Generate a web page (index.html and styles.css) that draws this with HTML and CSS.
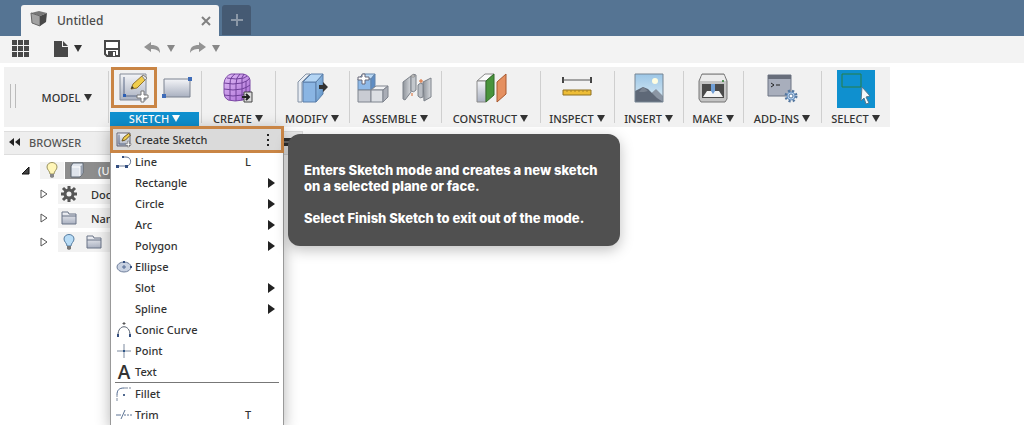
FILE: index.html
```html
<!DOCTYPE html>
<html lang="en">
<head>
  <meta charset="UTF-8">
  <meta name="viewport" content="width=device-width, initial-scale=1.0">
  <title>Untitled</title>
  <link rel="stylesheet" href="styles.css">
</head>
<body>
  <!-- shared gradients -->
  <svg class="defs" aria-hidden="true">
    <defs>
      <linearGradient id="steel" x1="0" y1="0" x2="0" y2="1"><stop offset="0" stop-color="#f4f5f8"/><stop offset="1" stop-color="#a9b0c0"/></linearGradient>
      <linearGradient id="blue" x1="0" y1="0" x2="1" y2="1"><stop offset="0" stop-color="#9cc4ea"/><stop offset="1" stop-color="#5c8fc4"/></linearGradient>
      <linearGradient id="purple" x1="0" y1="0" x2="1" y2="1"><stop offset="0" stop-color="#e0bcf6"/><stop offset="1" stop-color="#a868d4"/></linearGradient>
      <linearGradient id="sky" x1="0" y1="0" x2="0" y2="1"><stop offset="0" stop-color="#9cc6e6"/><stop offset="1" stop-color="#dcecf4"/></linearGradient>
      <linearGradient id="plate" x1="0" y1="0" x2="1" y2="0"><stop offset="0" stop-color="#8f949b"/><stop offset="1" stop-color="#d6d9dd"/></linearGradient>
    </defs>
  </svg>

  <div class="app">
    <header class="titlebar">
      <div class="tab">
        <svg class="tab-icon" viewBox="0 0 18 18"><path d="M1 3 9 1l8 2-7 3z" fill="#777"/><path d="M1 3l9 3v10l-8-3z" fill="#a2a2a2" stroke="#666"/><path d="M10 6l7-3-1 9-6 4z" fill="#484848"/></svg>
        <span class="tab-title">Untitled</span>
        <button class="tab-close" aria-label="Close tab"><svg width="10" height="10" viewBox="0 0 10 10"><path d="M1 1l8 8M9 1 1 9" stroke="#808080" stroke-width="2"/></svg></button>
      </div>
      <button class="tab-add" aria-label="New tab"><svg width="12" height="12" viewBox="0 0 12 12"><path d="M6 0v12M0 6h12" stroke="#8b98a7" stroke-width="2"/></svg></button>
    </header>

    <nav class="quickbar">
      <button aria-label="Data panel"><svg width="18" height="17" viewBox="0 0 18 17"><path d="M0 0h5v5H0zM6 0h5v5H6zM12 0h5v5h-5zM0 6h5v5H0zM6 6h5v5H6zM12 6h5v5h-5zM0 12h5v5H0zM6 12h5v5H6zM12 12h5v5h-5z" fill="#484848"/></svg></button>
      <button class="file" aria-label="File"><svg width="14" height="17" viewBox="0 0 14 17"><path d="M0 1h8v6h6v10H0zM9 1l5 5H9z" fill="#484848"/></svg><i class="caret"></i></button>
      <button class="save" aria-label="Save"><svg width="16" height="17" viewBox="0 0 16 17"><path d="M1 1h14v15H3l-2-2z" fill="#fff" stroke="#484848" stroke-width="2"/><path d="M1 8h14v2H1zM4 11h8v6H4z" fill="#484848"/><path d="M9 12h2v4H9z" fill="#fff"/></svg></button>
      <button class="undo" aria-label="Undo"><svg width="17" height="14" viewBox="0 0 17 14"><path d="M0 6l7-5v3c6 0 9 2 9 8-2-3-4-4-9-4v3z" fill="#939393"/></svg><i class="caret grey"></i></button>
      <button aria-label="Redo"><svg width="17" height="14" viewBox="0 0 17 14"><path d="M17 6l-7-5v3C4 4 1 6 1 12c2-3 4-4 9-4v3z" fill="#939393"/></svg><i class="caret grey"></i></button>
    </nav>

    <div class="ribbon">
      <div class="grip"></div>
      <button class="workspace">MODEL<i class="caret"></i></button>

      <section class="group sketch open">
        <div class="icons">
          <button class="tool marked" aria-label="Create Sketch">
            <svg width="32" height="32" viewBox="0 0 32 32"><path d="M2 2h26v26H2z" fill="url(#steel)" stroke="#848b98"/><path d="M6 5v19h17" fill="none" stroke="#5c6b88"/><path d="M5 22h3v3H5z" fill="#2d5fb4"/><path d="M13 17l2-5L25 3l4 3-10 10z" fill="#f0cd4c" stroke="#94742c"/><path d="M24 4l1-1 4 3-2 2z" fill="#eee" stroke="#888"/><path d="M13 17l1-3 2 2z" fill="#333"/><path d="M23 19h3v4h4v3h-4v4h-3v-4h-4v-3h4z" fill="#fff" stroke="#777"/></svg>
          </button>
          <button class="tool" aria-label="Rectangle">
            <svg width="32" height="32" viewBox="0 0 32 32"><path d="M3 7h26v18H3z" fill="url(#steel)" stroke="#7b8290"/><path d="M27 5h4v4h-4zM1 22h4v4H1z" fill="#3f6cb8"/></svg>
          </button>
        </div>
        <button class="label">SKETCH<i class="caret"></i></button>

        <div class="menu">
          <ul>
            <li class="item current">
              <svg width="16" height="16" viewBox="0 0 32 32"><path d="M2 2h26v26H2z" fill="url(#steel)" stroke="#667" stroke-width="2"/><path d="M6 5v19h17" fill="none" stroke="#5c6b88" stroke-width="2"/><path d="M12 18l3-7L25 3l4 3-10 10z" fill="#f0cd4c" stroke="#6b5520" stroke-width="2"/><path d="M23 18h3v5h4v3h-4v4h-3v-4h-4v-3h4z" fill="#fff" stroke="#666"/></svg>
              <button>Create Sketch</button>
              <svg class="more" width="4" height="14" viewBox="0 0 4 14"><path d="M1 1h2v2H1zM1 6h2v2H1zM1 11h2v2H1z" fill="#222"/></svg>
            </li>
            <li class="item">
              <svg width="16" height="16" viewBox="0 0 16 16"><path d="M2 12h9M7 3h3c6 0 6 8 1 9" fill="none" stroke="#667693"/><path d="M0 11h3v3H0zM9 11h3v3H9zM6 2h2v2H6z" fill="#344f80"/></svg>
              <button>Line</button><kbd>L</kbd>
            </li>
            <li class="item"><span class="blank"></span><button>Rectangle</button><i class="sub"></i></li>
            <li class="item"><span class="blank"></span><button>Circle</button><i class="sub"></i></li>
            <li class="item"><span class="blank"></span><button>Arc</button><i class="sub"></i></li>
            <li class="item"><span class="blank"></span><button>Polygon</button><i class="sub"></i></li>
            <li class="item">
              <svg width="16" height="16" viewBox="0 0 16 16"><ellipse cx="8" cy="8" rx="7" ry="5" fill="#c9d2e2" stroke="#6f7f9c"/><path d="M8 6v4M6 8h4" stroke="#536a94"/><path d="M7 2h2v2H7zM14 7h2v2h-2z" fill="#344f80"/></svg>
              <button>Ellipse</button>
            </li>
            <li class="item"><span class="blank"></span><button>Slot</button><i class="sub"></i></li>
            <li class="item"><span class="blank"></span><button>Spline</button><i class="sub"></i></li>
            <li class="item">
              <svg width="16" height="16" viewBox="0 0 16 16"><path d="M2 13C2 2 14 2 14 13" fill="none" stroke="#56606f"/><path d="M1 12h2v3H1zM13 12h2v3h-2z" fill="#344f80"/><path d="M8 0v3M6.500 1.500h3" stroke="#555"/></svg>
              <button>Conic Curve</button>
            </li>
            <li class="item">
              <svg width="16" height="16" viewBox="0 0 16 16"><path d="M8 1v14M1 8h14" stroke="#7d8a9f"/><path d="M7 7h2v2H7z" fill="#2f5687"/></svg>
              <button>Point</button>
            </li>
            <li class="item"><span class="glyph">A</span><button>Text</button></li>
            <li class="item ruled">
              <svg width="16" height="16" viewBox="0 0 16 16"><path d="M1 15V9" stroke="#7d8a9f" stroke-dasharray="3 1"/><path d="M1 9c0-5 2-7 7-7" fill="none" stroke="#50698f"/><path d="M8 2h7" stroke="#7d8a9f" stroke-dasharray="4 1"/><path d="M7 8h2v2H7z" fill="#50698f"/></svg>
              <button>Fillet</button>
            </li>
            <li class="item">
              <svg width="16" height="16" viewBox="0 0 16 16"><path d="M0 8h5M5 12l4-9" stroke="#5e7595"/><path d="M8 8h8" stroke="#5e7595" stroke-dasharray="2 1"/></svg>
              <button>Trim</button><kbd>T</kbd>
            </li>
          </ul>
          <div class="tooltip" role="tooltip">
            <p>Enters Sketch mode and creates a new sketch on a selected plane or face.</p>
            <p>Select Finish Sketch to exit out of the mode.</p>
          </div>
        </div>
      </section>

      <section class="group create">
        <div class="icons">
          <button class="tool" aria-label="Create form">
            <svg width="32" height="32" viewBox="0 0 32 32"><path d="M2 11Q3 4 9 2h12q6 1 7 6v12q-1 5-7 8-8 2-15 0-4-2-4-7z" fill="url(#purple)" stroke="#7d4aa6"/><path d="M2 11q9 2 18 0 6-2 8-5M5 6q9 2 17 0l3-2M2 17q9 2 18 0 6-2 8-4M2 23q9 2 18 0 6-2 8-4M8 12v16M14 12v17M20 11v17M24 9v17M8 12q0-7 5-10M14 12q0-7 4-10M20 11q-1-6 2-9" fill="none" stroke="#70409a"/><path d="M22 20h8v10h-8z" fill="#ddd" stroke="#444"/><path d="M20 25h7M24 22l3 3-3 3" fill="none" stroke="#222" stroke-width="2"/></svg>
          </button>
        </div>
        <button class="label">CREATE<i class="caret"></i></button>
      </section>

      <section class="group modify">
        <div class="icons">
          <button class="tool" aria-label="Press Pull">
            <svg width="32" height="32" viewBox="0 0 32 32"><path d="M2 10l8-8h4l-8 8v20H2z" fill="#e6ebf2" stroke="#8593a5" stroke-linejoin="round"/><path d="M7 10h13v20H7z" fill="#8ab5e3" stroke="#5a7faa"/><path d="M20 10l7-8v20l-7 8z" fill="url(#blue)" stroke="#5a7faa"/><path d="M7 10l8-8h12l-7 8z" fill="#b4d5f4" stroke="#5a7faa" stroke-linejoin="round"/><path d="M23 13h4v-3l5 5-5 5v-3h-4z" fill="#333"/></svg>
          </button>
        </div>
        <button class="label">MODIFY<i class="caret"></i></button>
      </section>

      <section class="group assemble">
        <div class="icons">
          <button class="tool" aria-label="New Component">
            <svg width="32" height="32" viewBox="0 0 32 32"><path d="M1 7l5-5h12l-4 5z" fill="#bcdaf6" stroke="#6485ab"/><path d="M1 7h13v11H1z" fill="#8fb9e7" stroke="#6485ab"/><path d="M14 7l4-5v12l-4 4z" fill="#5e8cc3" stroke="#6485ab"/><path d="M1 18h13v12H1z" fill="#c9ccd3" stroke="#7f848e"/><path d="M14 18l5-4h12l-5 4z" fill="#f2f3f5" stroke="#7f848e"/><path d="M14 18h12v12H14z" fill="#dcdfe4" stroke="#7f848e"/><path d="M26 18l5-4v11l-5 5z" fill="#a9adb6" stroke="#7f848e"/><path d="M5 2h3v3h4v3H8v4H5V8H1V5h4z" fill="#fff" stroke="#667"/></svg>
          </button>
          <button class="tool" aria-label="Joint">
            <svg width="32" height="32" viewBox="0 0 32 32"><path d="M2 10l8-6v16l-6 8-2-1z" fill="url(#plate)" stroke="#7d828a" stroke-linejoin="round"/><path d="M10 4q3-3 5-1v15q-2 3-5 1z" fill="#c3c7cc" stroke="#7d828a"/><ellipse cx="12" cy="4" rx="2" ry="1" fill="#f4f4f4" stroke="#888"/><path d="M22 10l8-4v19l-7 4z" fill="url(#plate)" stroke="#7d828a" stroke-linejoin="round"/><path d="M17 13q2-3 5-1v13q-3 2-5-1z" fill="#b9bdc3" stroke="#7d828a"/><path d="M11 21v3M20 7v4M18 9h4" stroke="#d8682e"/></svg>
          </button>
        </div>
        <button class="label">ASSEMBLE<i class="caret"></i></button>
      </section>

      <section class="group construct">
        <div class="icons">
          <button class="tool" aria-label="Offset Plane">
            <svg width="32" height="32" viewBox="0 0 32 32"><path d="M2 9l8-7h9l-8 7z" fill="#fafafa" stroke="#8a8a8a"/><path d="M2 9h9v21H2z" fill="url(#steel)" stroke="#8a8a8a"/><path d="M11 9l8-7v21l-8 7z" fill="#49943c" stroke="#326b2a"/><path d="M22 10l9-8v20l-9 8z" fill="#e59060" stroke="#a8582e"/></svg>
          </button>
        </div>
        <button class="label">CONSTRUCT<i class="caret"></i></button>
      </section>

      <section class="group inspect">
        <div class="icons">
          <button class="tool" aria-label="Measure">
            <svg width="32" height="32" viewBox="0 0 32 32"><path d="M2 5v6M30 5v6" stroke="#444" stroke-width="2"/><path d="M2 8h28" stroke="#555"/><path d="M2 18h28v5H2z" fill="#eebd36" stroke="#8f7020"/><path d="M6 18v2M10 18v2M14 18v2M18 18v2M22 18v2M26 18v2" stroke="#a98426"/></svg>
          </button>
        </div>
        <button class="label">INSPECT<i class="caret"></i></button>
      </section>

      <section class="group insert">
        <div class="icons">
          <button class="tool" aria-label="Insert image">
            <svg width="32" height="32" viewBox="0 0 32 32"><path d="M2 2h28v28H2z" fill="url(#sky)"/><circle cx="22" cy="9" r="3" fill="#fffde0"/><path d="M14 25l9-8 7 7v6H14z" fill="#8b96a4"/><path d="M2 19l8-4 5 2 9 9 6 4H2z" fill="#5e6877"/><path d="M6 20l4-5 5 4-4 1z" fill="#79828f"/><path d="M2 2h28v28H2z" fill="none" stroke="#778593"/></svg>
          </button>
        </div>
        <button class="label">INSERT<i class="caret"></i></button>
      </section>

      <section class="group make">
        <div class="icons">
          <button class="tool" aria-label="3D Print">
            <svg width="32" height="32" viewBox="0 0 32 32"><path d="M5 2h22l3 7v18l-2 3H4l-2-3V9z" fill="#c4c4c4" stroke="#777" stroke-linejoin="round"/><path d="M5 3h22l2 6H3z" fill="#ececec"/><path d="M5 12h22v14H5z" fill="#4a4a4a"/><path d="M10 19h12l4 6H6z" fill="#f4f4f4"/><path d="M14 12h4v7l-2 3-2-3z" fill="#6f9ed5"/><circle cx="26" cy="9" r="1" fill="#297b2c"/></svg>
          </button>
        </div>
        <button class="label">MAKE<i class="caret"></i></button>
      </section>

      <section class="group addins">
        <div class="icons">
          <button class="tool" aria-label="Scripts and Add-Ins">
            <svg width="32" height="32" viewBox="0 0 32 32"><path d="M2 3h23v21H2z" fill="#a8aebc" stroke="#6d7484"/><path d="M2 3h23v4H2z" fill="#686e7b"/><path d="M5 11l3 2-3 2M10 13h4" fill="none" stroke="#222"/><circle cx="25" cy="24" r="5" fill="none" stroke="#54779f" stroke-width="3" stroke-dasharray="2 2"/><circle cx="25" cy="24" r="4" fill="#bcd4ee" stroke="#6a92c0"/><circle cx="25" cy="24" r="2" fill="#fff" stroke="#54779f"/></svg>
          </button>
        </div>
        <button class="label">ADD-INS<i class="caret"></i></button>
      </section>

      <section class="group select">
        <div class="icons">
          <button class="tool active" aria-label="Select">
            <svg width="38" height="38" viewBox="0 0 38 38"><path d="M5 4h19v13H5z" fill="none" stroke="#287f45"/><path d="M25 17l8 9-4 1 3 6-3 1-2-6-3 3z" fill="#f3f7fa" stroke="#52788e"/></svg>
          </button>
        </div>
        <button class="label">SELECT<i class="caret"></i></button>
      </section>
    </div>

    <aside class="browser">
      <div class="browser-head">
        <svg width="11" height="8" viewBox="0 0 11 8"><path d="M5 0v8L0 4zM11 0v8L6 4z" fill="#222"/></svg>
        <span>BROWSER</span>
        <svg class="collapse" width="14" height="8" viewBox="0 0 14 8"><path d="M0 0h14v8H0z" fill="#333"/><path d="M2 4h10" stroke="#aaa"/></svg>
      </div>
      <ul class="tree">
        <li class="node root">
          <svg class="twist" width="10" height="9" viewBox="0 0 10 9"><path d="M8 1v7H1z" fill="#444" stroke="#111"/></svg>
          <span class="chip bulb"><svg width="12" height="17" viewBox="0 0 12 17"><path d="M4 12C4 9 1 8 1 5c0-6 10-6 10 0 0 3-3 4-3 7z" fill="#fff6b8" stroke="#9a9360"/><path d="M4 12h4v3l-2 1-2-1z" fill="#888"/></svg></span>
          <span class="chip dark"><svg width="16" height="16" viewBox="0 0 16 16"><path d="M2 4l2-3h10v10l-3 4H2z" fill="#dfe4ec" stroke="#5d6672" stroke-linejoin="round"/><path d="M11 5l3-3v9l-3 3z" fill="#9aa3b2"/><path d="M3 5h8v9" fill="none" stroke="#fff"/></svg>(U</span>
        </li>
        <li class="node">
          <svg class="twist" width="8" height="10" viewBox="0 0 8 10"><path d="M1 1l6 4-6 4z" fill="#fff" stroke="#555"/></svg>
          <span class="chip"><svg width="18" height="18" viewBox="0 0 18 18"><path d="M9 1v16M1 9h16M3 3l12 12M15 3 3 15" stroke="#555" stroke-width="3"/><circle cx="9" cy="9" r="4" fill="#f1f1f1" stroke="#555" stroke-width="3"/></svg>Doc</span>
        </li>
        <li class="node">
          <svg class="twist" width="8" height="10" viewBox="0 0 8 10"><path d="M1 1l6 4-6 4z" fill="#fff" stroke="#555"/></svg>
          <span class="chip"><svg width="18" height="18" viewBox="0 0 18 18"><path d="M2 15V3h6l1 2h7v10z" fill="url(#steel)" stroke="#687386"/><path d="M2 7h14" stroke="#687386"/></svg>Nam</span>
        </li>
        <li class="node">
          <svg class="twist" width="8" height="10" viewBox="0 0 8 10"><path d="M1 1l6 4-6 4z" fill="#fff" stroke="#555"/></svg>
          <span class="chip"><svg width="18" height="17" viewBox="0 0 18 17"><path d="M7 12c0-3-3-4-3-7 0-6 10-6 10 0 0 3-3 4-3 7z" fill="#b8dcf6" stroke="#557ca0"/><path d="M7 12h4v3l-2 1-2-1z" fill="#777"/></svg><svg width="18" height="18" viewBox="0 0 18 18"><path d="M2 15V3h6l1 2h7v10z" fill="url(#steel)" stroke="#687386"/><path d="M2 7h14" stroke="#687386"/></svg></span>
        </li>
      </ul>
    </aside>
  </div>
</body>
</html>
```
FILE: styles.css
```css
*, *::before, *::after {
  box-sizing: border-box;
}
body {
  margin: 0;
  font-family: 'Noto Sans', sans-serif;
  font-size: 11px;
  font-weight: 500;
  color: #333;
  background: white;
}
button {
  margin: 0;
  padding: 0;
  border: none;
  background: transparent;
  font: inherit;
  color: inherit;
  cursor: pointer;
}
ul {
  list-style: none;
  margin: 0;
  padding: 0;
}
svg {
  display: block;
  flex: none;
}
.defs {
  position: absolute;
  width: 0;
  height: 0;
}
.app {
  height: 100vh;
  overflow: hidden;
}
.caret {
  border: 4px solid transparent;
  border-top: 7px solid #333;
  border-bottom: 0;
}
.caret.grey {
  border-top-color: #888;
}

/* title bar */
.titlebar {
  display: flex;
  gap: 3px;
  padding: 5px 21px 0;
  height: 36px;
  background: #557493;
}
.tab {
  display: flex;
  align-items: center;
  width: 198px;
  padding: 0 8px 0 9px;
  background: #f3f3f3;
  border-radius: 3px 3px 0 0;
}
.tab-icon {
  width: 18px;
  height: 18px;
  margin-bottom: 4px;
}
.tab-title {
  margin-left: 9px;
  font-size: 12px;
  color: #4c4c4c;
}
.tab-close {
  margin-left: auto;
}
.tab-add {
  display: flex;
  align-items: center;
  justify-content: center;
  width: 29px;
  height: 30px;
  background: #455a73;
  border-radius: 3px 3px 0 0;
}

/* quick access */
.quickbar {
  display: flex;
  align-items: center;
  gap: 12px;
  height: 27px;
  padding: 0 12px 3px;
  background: #f3f3f3;
}
.quickbar button {
  display: flex;
  align-items: center;
  gap: 6px;
}
.quickbar .file {
  margin-left: 12px;
}
.quickbar .save {
  margin: 0 12px 0 10px;
}
.quickbar .undo {
  margin-right: 2px;
}

/* ribbon */
.ribbon {
  display: flex;
  width: fit-content;
  height: 60px;
  margin: 4px 0 4px 4px;
  background: #f1f1f1;
}
.grip {
  width: 6px;
  height: 24px;
  margin: 17px 0 0 6px;
  border: 1px solid #bbb;
  border-width: 0 1px;
}
.workspace {
  display: flex;
  align-items: center;
  justify-content: center;
  gap: 4px;
  width: 92px;
  padding-left: 10px;
}
.group {
  position: relative;
  display: flex;
  flex-direction: column;
  justify-content: space-between;
}
.group::before {
  content: "";
  position: absolute;
  left: 0;
  top: 4px;
  bottom: 4px;
  width: 1px;
  background: #cfcfcf;
}
.icons {
  display: flex;
  justify-content: center;
  gap: 4px;
  height: 41px;
}
.tool {
  display: flex;
  align-items: center;
  justify-content: center;
}
.marked {
  width: 46px;
  border: 3px solid #c98545;
}
.tool.active {
  align-self: flex-end;
  background: #0f90cf;
}
.label {
  display: flex;
  align-items: center;
  justify-content: center;
  gap: 3px;
  height: 15px;
  padding-bottom: 2px;
  line-height: 15px;
}
.sketch { width: 93px; }
.sketch .icons { justify-content: flex-start; padding-left: 3px; }
.sketch .label {
  margin: 0 2px;
  color: white;
  background: #0f90cf;
}
.sketch .caret { border-top-color: white; }
.create, .modify, .inspect { width: 74px; }
.assemble { width: 92px; }
.assemble .icons { gap: 12px; }
.construct { width: 99px; }
.insert { width: 69px; }
.make { width: 60px; }
.addins { width: 78px; }
.select { width: 69px; }

/* drop-down */
.menu {
  position: absolute;
  top: 59px;
  left: 2px;
  z-index: 2;
  width: 174px;
  border: 1px solid #999;
  background: white;
  box-shadow: 0 3px 14px rgba(0, 0, 0, 0.3);
}
.item {
  display: flex;
  align-items: center;
  gap: 3px;
  height: 21px;
  padding: 0 8px 0 5px;
}
.item button {
  flex: 1;
  text-align: left;
}
.item kbd {
  width: 30px;
  font: inherit;
}
.item.current {
  height: 27px;
  margin: -1px -1px -2px;
  padding: 0 11px 0 3px;
  border: 3px solid #c98545;
  background: #dadada;
}
.item.ruled {
  height: 22px;
  border-top: 1px solid #777;
  margin: 0 4px;
  padding: 0 4px 0 1px;
}
.blank, .glyph {
  width: 16px;
}
.glyph {
  font-family: 'Open Sans', sans-serif;
  font-size: 19px;
  font-weight: 600;
  line-height: 20px;
  text-align: center;
}
.sub {
  border: 5px solid transparent;
  border-left: 7px solid #222;
  border-right: 0;
}

.tooltip {
  position: absolute;
  top: 7px;
  left: 177px;
  width: 332px;
  padding: 28px 14px 20px 16px;
  border-radius: 12px;
  background: #505050;
  box-shadow: 0 4px 14px rgba(0, 0, 0, 0.25);
  font-family: Inter, sans-serif;
  font-size: 13px;
  font-weight: 800;
  line-height: 16px;
  color: white;
}
.tooltip p {
  margin: 0 0 16px;
}
.tooltip p:last-child {
  margin-bottom: 0;
}

/* browser panel */
.browser {
  width: 299px;
  margin-left: 4px;
}
.browser-head {
  display: flex;
  align-items: center;
  gap: 9px;
  height: 24px;
  padding: 0 8px 2px 5px;
  border: 1px solid #ddd;
  border-left: 0;
  background: #eee;
  color: #555;
}
.collapse {
  margin-left: auto;
}
.tree {
  padding-top: 3px;
}
.node {
  display: flex;
  align-items: center;
  height: 24px;
  padding-left: 36px;
}
.node.root {
  padding-left: 17px;
}
.node .chip {
  display: flex;
  align-items: center;
  gap: 13px;
  flex: 1;
  height: 20px;
  margin: 0 100px 0 10px;
  padding-left: 2px;
  background: #f2f2f2;
}
.chip svg + svg {
  margin-left: -6px;
}
.root .chip {
  height: 17px;
}
.root .bulb {
  flex: none;
  width: 24px;
  margin: 0 0 0 9px;
  padding-left: 6px;
}
.root .dark {
  margin-left: 1px;
  padding-left: 4px;
  background: #8d8d8d;
  color: white;
}
```
